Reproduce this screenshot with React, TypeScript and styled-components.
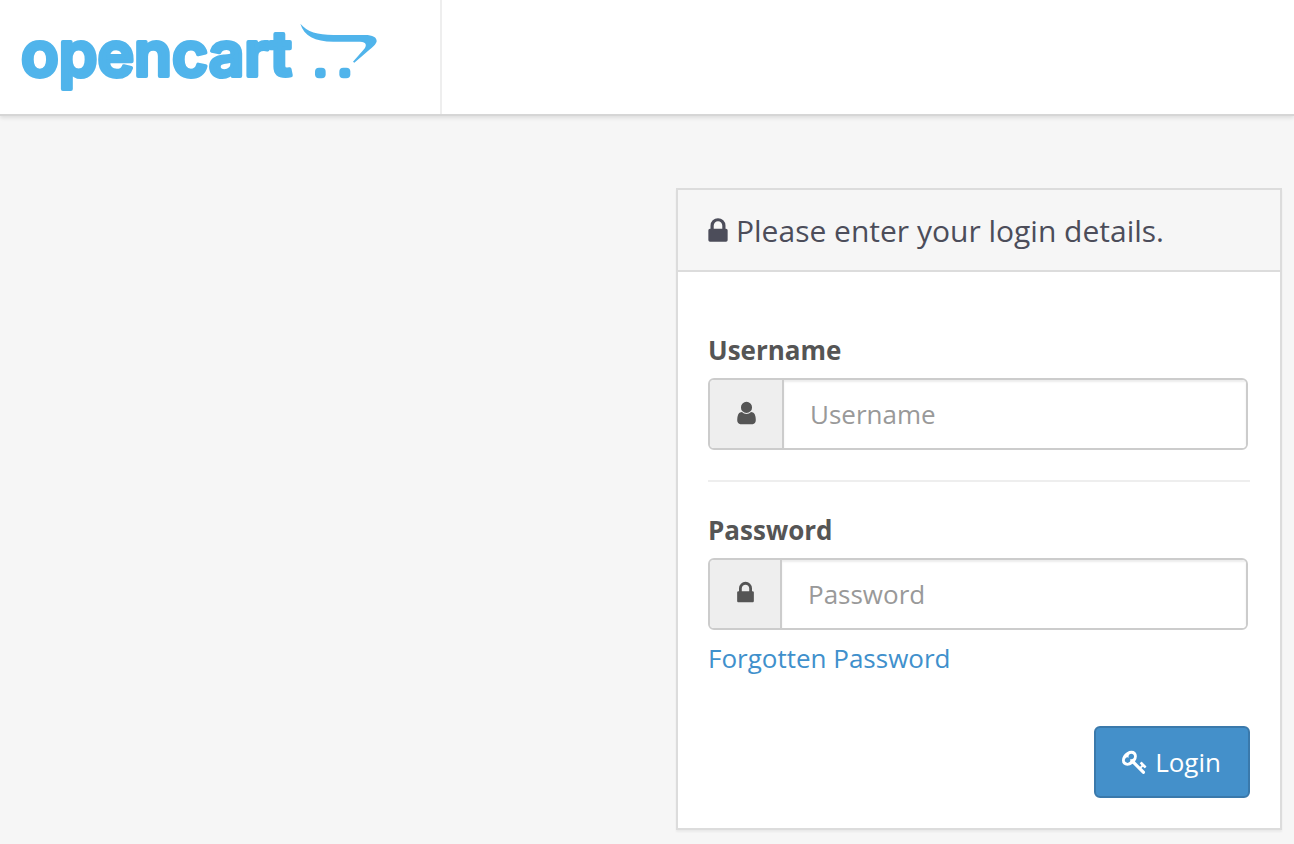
import React from 'react';
import styled, { createGlobalStyle } from 'styled-components';

const GlobalStyle = createGlobalStyle`
  *, *::before, *::after { box-sizing: border-box; }
  body {
    margin: 0;
    background: #f6f6f6;
    color: #555;
    font-family: 'Open Sans', 'Noto Sans', sans-serif;
    font-size: 26px;
    line-height: 36px;
  }
`;

const Header = styled.header`
  display: flex;
  height: 116px;
  background: #fff;
  border-bottom: 2px solid #d6d6d6;
  box-shadow: 0 2px 4px rgba(0, 0, 0, 0.1);
`;

const Brand = styled.a`
  display: block;
  width: 442px;
  padding: 6px 10px;
  border-right: 2px solid #eee;
  color: #50b4eb;
`;

const Logo = styled.svg`
  display: block;
  fill: currentColor;
`;

const Wordmark = styled.text`
  font-family: Inter, 'Open Sans', sans-serif;
  font-size: 62px;
  font-weight: 600;
  line-height: 76px;
  stroke: currentColor;
  stroke-width: 4px;
  stroke-linejoin: round;
`;

const Main = styled.main`
  display: flex;
  justify-content: flex-end;
  padding: 72px 12px 14px;
`;

const Panel = styled.section`
  width: 100%;
  max-width: 606px;
  background: #fff;
  border: 2px solid #dcdcdc;
  box-shadow: 0 2px 2px rgba(0, 0, 0, 0.05);
`;

const PanelHeading = styled.h1`
  display: flex;
  align-items: center;
  gap: 8px;
  margin: 0;
  padding: 20px 30px 18px;
  border-bottom: 2px solid #dcdcdc;
  background: #f6f6f6;
  color: #4c4d5a;
  font-size: 30px;
  font-weight: 400;
  line-height: 42px;
`;

const Form = styled.form`
  padding: 60px 30px 30px;
`;

const Field = styled.div`
  display: flex;
  flex-direction: column;
  gap: 10px;

  & + & {
    margin-top: 30px;
    padding-top: 30px;
    border-top: 2px solid #eee;
  }
`;

const Label = styled.label`
  font-weight: 700;
`;

const InputGroup = styled.div`
  display: flex;
  height: 72px;
  margin-right: 2px;
  border: 2px solid #ccc;
  border-radius: 6px;
  overflow: hidden;
`;

const Addon = styled.span`
  display: flex;
  align-items: center;
  padding: 0 26px 2px 27px;
  background: #eee;
  border-right: 2px solid #ccc;
`;

const Input = styled.input`
  flex: 1;
  min-width: 0;
  padding: 0 26px;
  border: 0;
  outline: 0;
  background: #fff;
  box-shadow: inset 0 2px 2px rgba(0, 0, 0, 0.075);
  color: #555;
  font: inherit;

  &::placeholder {
    color: #999;
    opacity: 1;
  }
`;

const ForgottenLink = styled.a`
  align-self: flex-start;
  color: #4090cc;
  text-decoration: none;
`;

const Actions = styled.div`
  display: flex;
  justify-content: flex-end;
  margin-top: 50px;
`;

const LoginButton = styled.button`
  display: flex;
  align-items: center;
  gap: 7px;
  height: 72px;
  padding: 0 27px 0 26px;
  border: 2px solid #3a79ab;
  border-radius: 6px;
  background: #4490ca;
  color: #fff;
  font: inherit;
  cursor: pointer;
`;

const Glyph = styled.svg`
  display: block;
  flex: none;
  fill: currentColor;
`;

const LockIcon = ({ width, height }: { width: number; height: number }) => (
  <Glyph width={width} height={height} viewBox="320 0 1152 1792" aria-hidden="true">
    <path d="M640 768h512v-192q0-106-75-181t-181-75-181 75-75 181v192zm832 96v576q0 40-28 68t-68 28h-960q-40 0-68-28t-28-68v-576q0-40 28-68t68-28h32v-192q0-184 132-316t316-132 316 132 132 316v192h32q40 0 68 28t28 68z" />
  </Glyph>
);

const UserIcon = () => (
  <Glyph width={19} height={26} viewBox="256 0 1280 1792" aria-hidden="true">
    <path d="M1536 1399q0 109-62.500 187t-150.500 78h-854q-88 0-150.500-78t-62.500-187q0-85 8.500-160.500t31.500-152 58.500-131 94-89 134.500-34.500q131 128 313 128t313-128q76 0 134.500 34.500t94 89 58.500 131 31.500 152 8.500 160.500zm-256-887q0 159-112.500 271.500t-271.500 112.500-271.500-112.500-112.500-271.500 112.500-271.500 271.500-112.500 271.500 112.500 112.500 271.500z" />
  </Glyph>
);

const KeyIcon = () => (
  <Glyph width={26} height={26} viewBox="0 0 1792 1792" aria-hidden="true">
    <path d="M832 512q0-80-56-136t-136-56-136 56-56 136q0 42 19 83-41-19-83-19-80 0-136 56t-56 136 56 136 136 56 136-56 56-136q0-42-19-83 41 19 83 19 80 0 136-56t56-136zm851 704q0 17-49 66t-66 49q-9 0-28.500-16t-36.500-33-38.500-40-24.500-26l-96 96 220 220q28 28 28 68 0 42-39 81t-81 39q-40 0-68-28l-671-671q-176 131-365 131-163 0-265.500-102.500t-102.500-265.500q0-160 95-313t248-248 313-95q163 0 265.500 102.500t102.500 265.500q0 189-131 365l355 355 96-96q-3-3-26-24.500t-40-38.500-33-36.500-16-28.500q0-17 49-66t66-49q13 0 23 10 6 6 46 44.500t82 79.500 86.500 86 73 78 28.500 41z" />
  </Glyph>
);

const BrandLogo = () => (
  <Logo width={380} height={100} viewBox="10 6 380 100" role="img" aria-label="opencart">
    <Wordmark x="21" y="76">opencart</Wordmark>
    <g transform="translate(190 0) scale(0.33333)">
      <path d="M331 71C352 96 382 104 430 105L525 105C548 105 561 112 560 124C559 132 548 142 540 148L493 188L489 185L520 150C532 137 530 125 510 125L430 125C374 124 342 108 331 71Z" />
      <rect x="375" y="203" width="32" height="32" rx="12" />
      <rect x="448" y="203" width="33" height="32" rx="12" />
    </g>
  </Logo>
);

export default function App() {
  return (
    <>
      <GlobalStyle />
      <Header>
        <Brand href="#">
          <BrandLogo />
        </Brand>
      </Header>
      <Main>
        <Panel>
          <PanelHeading>
            <LockIcon width={20} height={30} />
            Please enter your login details.
          </PanelHeading>
          <Form onSubmit={(event) => event.preventDefault()}>
            <Field>
              <Label htmlFor="username">Username</Label>
              <InputGroup>
                <Addon><UserIcon /></Addon>
                <Input id="username" type="text" placeholder="Username" />
              </InputGroup>
            </Field>
            <Field>
              <Label htmlFor="password">Password</Label>
              <InputGroup>
                <Addon><LockIcon width={17} height={26} /></Addon>
                <Input id="password" type="password" placeholder="Password" />
              </InputGroup>
              <ForgottenLink href="#">Forgotten Password</ForgottenLink>
            </Field>
            <Actions>
              <LoginButton type="submit">
                <KeyIcon />
                Login
              </LoginButton>
            </Actions>
          </Form>
        </Panel>
      </Main>
    </>
  );
}
